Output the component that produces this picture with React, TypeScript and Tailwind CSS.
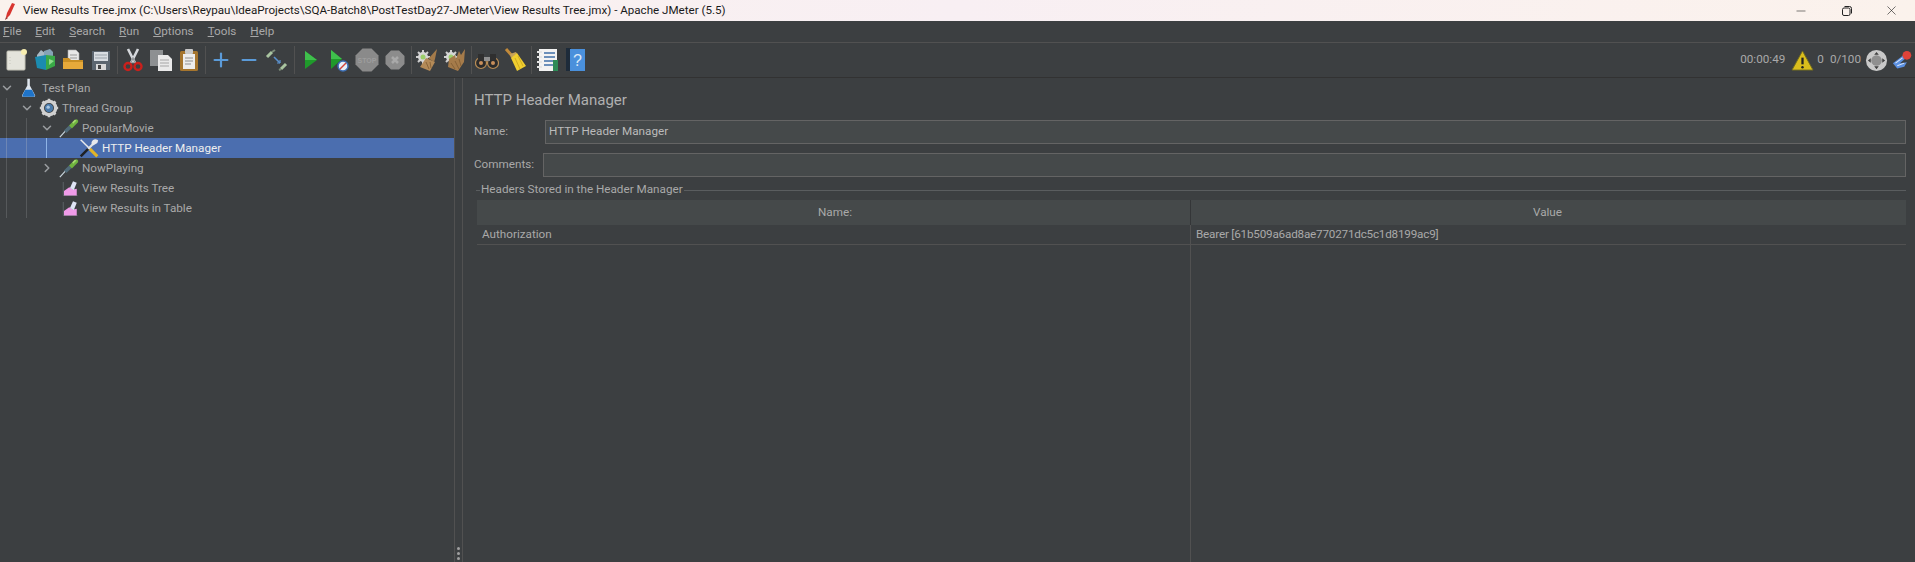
import type { ReactNode } from "react";
import { ChevronDown, ChevronRight, Minus, Plus, X } from "lucide-react";

const sans = "font-['Roboto','Open_Sans',sans-serif]";

function Svg({ size = 24, children }: { size?: number; children: ReactNode }) {
  return (
    <svg width={size} height={size} viewBox="0 0 24 24" className="shrink-0">
      {children}
    </svg>
  );
}

const NewIcon = () => (
  <Svg>
    <rect x="2" y="3" width="18" height="19" rx="1" fill="#e4e4dc" stroke="#c4c4b8" />
    <circle cx="19" cy="4" r="3" fill="#f7eeb0" />
    <path d="M5 9v9" stroke="#c8c8be" strokeDasharray="1 2" />
  </Svg>
);

const TemplatesIcon = () => (
  <Svg>
    <path d="M4 7l4-5 4 3v6H4z" fill="#a9b9c4" />
    <path d="M11 3l6-2 3 3v7h-9z" fill="#86a3b6" />
    <path d="M2 9l11-2v15l-9-2z" fill="#1b8bb0" />
    <path d="M13 7l9 1v10l-9 4z" fill="#39a947" />
    <path d="M16 11l5 2-5 4z" fill="#8fdc8c" />
  </Svg>
);

const OpenIcon = () => (
  <Svg>
    <path d="M7 2h8l3 3v10H7z" fill="#e8e8e8" stroke="#aaa" strokeWidth="0.6" />
    <path d="M9 7h7M9 10h7" stroke="#999" />
    <path d="M2 10h6l2 2h12v9H2z" fill="#c98f24" />
    <path d="M2 14h20v7H2z" fill="#e6a93a" />
  </Svg>
);

const SaveIcon = () => (
  <Svg>
    <path d="M3 3h18v19H3z" fill="#5c6670" />
    <rect x="5" y="4" width="14" height="9" fill="#d8dde2" />
    <path d="M6 7h12M6 10h12" stroke="#9aa3ab" />
    <rect x="7" y="16" width="10" height="6" fill="#d9d9d9" />
    <rect x="9" y="17" width="3" height="4" fill="#444" />
  </Svg>
);

const CutIcon = () => (
  <Svg>
    <path d="M7 1l7 14M17 1l-7 14" stroke="#d5d8dc" strokeWidth="2.6" />
    <path d="M11.8 9.5L14 15M12.2 9.5L10 15" stroke="#8b8f93" strokeWidth="1" />
    <circle cx="7" cy="18.5" r="3.5" fill="none" stroke="#c9201c" strokeWidth="2.4" />
    <circle cx="17" cy="18.5" r="3.5" fill="none" stroke="#c9201c" strokeWidth="2.4" />
  </Svg>
);

const CopyIcon = () => (
  <Svg>
    <path d="M1 2h13v16H1z" fill="#8d9092" />
    <path d="M9 7h10l4 4v12H9z" fill="#e9e9e9" />
    <path d="M11 12h9M11 15h9M11 18h9" stroke="#a5a5a5" />
  </Svg>
);

const PasteIcon = () => (
  <Svg>
    <rect x="3" y="3" width="18" height="20" rx="1.5" fill="#a5752e" />
    <path d="M6 6h12v15H6z" fill="#ededed" />
    <rect x="8" y="1" width="8" height="5" rx="1" fill="#c9c9c9" />
    <path d="M8 10h8M8 13h8M8 16h6" stroke="#8f8f8f" />
  </Svg>
);

const ToggleIcon = () => (
  <Svg>
    <path d="M2 9l5-5" stroke="#a9c4a0" strokeWidth="3" />
    <path d="M7 4l3-2" stroke="#7c8c78" strokeWidth="2" />
    <path d="M16 21l5-5" stroke="#a9c4a0" strokeWidth="3" />
    <path d="M14 22l2-1" stroke="#7c8c78" strokeWidth="2" />
    <path d="M9 9l6 6" stroke="#5b92cf" strokeWidth="1.6" />
    <path d="M15 15l-3 0M15 15l0-3" stroke="#5b92cf" strokeWidth="1.2" />
  </Svg>
);

const PlayIcon = ({ small = false }: { small?: boolean }) => (
  <Svg>
    <path d={small ? "M4 2l11 9-11 10z" : "M6 3l12 9-12 9z"} fill="#1f9a2b" />
    <path d={small ? "M4 2l11 9H4z" : "M6 3l12 9H6z"} fill="#3fc04c" />
  </Svg>
);

const NoPauseIcon = () => (
  <Svg>
    <PlayIcon small />
    <circle cx="16" cy="18" r="5" fill="#e6eef8" stroke="#3c6fb5" strokeWidth="1.5" />
    <path d="M13 21l6-6" stroke="#d2433a" strokeWidth="1.4" />
  </Svg>
);

const StopIcon = () => (
  <Svg>
    <path d="M7.5 0.5h9l7 7v9l-7 7h-9l-7-7v-9z" fill="#8a8a8a" />
    <text x="12" y="14.5" textAnchor="middle" fontSize="7" fontWeight="700" fill="#9d9d9d" fontFamily="Liberation Sans, sans-serif">
      STOP
    </text>
  </Svg>
);

const ShutdownIcon = () => (
  <Svg>
    <path d="M8 2.5h8l5.5 5.5v8L16 21.5H8L2.5 16V8z" fill="#8c8c8c" />
    <path d="M9 9l6 6M15 9l-6 6" stroke="#a9a9a9" strokeWidth="2.6" />
  </Svg>
);

const ClearIcon = ({ double = false }: { double?: boolean }) => (
  <Svg>
    <path
      d="M8 2v3M8 13v3M1 9h3M12 9h3M3 4l2 2M11 12l2 2M3 14l2-2M11 6l2-2"
      stroke="#cfcfcf"
      strokeWidth="2"
    />
    <circle cx="8" cy="9" r="5" fill="#d7d7d7" />
    <circle cx="8" cy="9" r="2.5" fill="#9bcf6a" />
    {double ? (
      <>
        <path d="M6 11l6-4 1 4 3-8 2 4 4-6-1 13-6 9-10-4z" fill="#a57b4a" />
        <path d="M8 15l4 6M12 13l4 8M16 11l2 7" stroke="#7d5a32" strokeWidth="0.8" />
      </>
    ) : (
      <>
        <path d="M22 1l-7 8-2 1 6 4 1-3z" fill="#a57b4a" />
        <path d="M11 10l9 4-5 9-10-4z" fill="#b38a58" />
        <path d="M11 14l3 7M15 14l1 6" stroke="#7d5a32" strokeWidth="0.8" />
      </>
    )}
  </Svg>
);

const SearchIcon = () => (
  <Svg>
    <circle cx="6" cy="15" r="5.5" fill="#2b2b2b" stroke="#b98d55" strokeWidth="1.2" />
    <circle cx="18" cy="15" r="5.5" fill="#2b2b2b" stroke="#b98d55" strokeWidth="1.2" />
    <path d="M3 6h6v6H3zM15 6h6v6h-6z" fill="#2f2f2f" />
    <rect x="9" y="9" width="6" height="4" fill="#8f8f8f" />
    <circle cx="6" cy="15" r="2" fill="#c98f5a" />
    <circle cx="18" cy="15" r="2" fill="#c98f5a" />
  </Svg>
);

const BroomIcon = () => (
  <Svg>
    <path d="M3 1l7 8" stroke="#c28a3a" strokeWidth="3" />
    <path d="M7 6l6-2 1 2-6 4z" fill="#c5a25a" />
    <path d="M8 10l6-5 9 13-9 5z" fill="#f0ce2f" />
    <path d="M12 10l5 11M15 8l5 10" stroke="#c7a21c" strokeWidth="0.8" />
  </Svg>
);

const FunctionIcon = () => (
  <Svg>
    <rect x="4" y="1" width="18" height="22" fill="#f2f2f2" />
    <path d="M9 5h11M9 9h11M9 13h11M9 17h11" stroke="#3f6fa8" strokeWidth="1.6" />
    <path d="M2 4h5M2 9h5M2 14h5M2 19h5" stroke="#e5e5e5" strokeWidth="2" />
    <rect x="18" y="12" width="5" height="11" fill="#2e8b57" />
  </Svg>
);

const HelpIcon = () => (
  <Svg>
    <rect x="3" y="0" width="5" height="23" fill="#1d2b3a" />
    <rect x="7" y="1" width="15" height="22" fill="#4a90dc" />
    <text x="14.5" y="18" textAnchor="middle" fontSize="16" fill="#dbe9f8" fontFamily="Liberation Sans, sans-serif">
      ?
    </text>
  </Svg>
);

const WarningIcon = () => (
  <Svg size={23}>
    <path d="M12 2l11 20H1z" fill="#d9bd1c" stroke="#6f6a22" />
    <path d="M12 9v7" stroke="#222" strokeWidth="2.4" />
    <circle cx="12" cy="19" r="1.3" fill="#222" />
  </Svg>
);

const GlobalIcon = () => (
  <Svg size={23}>
    <circle cx="12" cy="12" r="11" fill="#c9c9c9" />
    <circle cx="12" cy="12" r="5.5" fill="#8f8f8f" />
    <path d="M12 3l2.4 3h-4.8zM12 21l2.4-3h-4.8zM3 12l3-2.4v4.8zM21 12l-3-2.4v4.8z" fill="#3f3f3f" />
  </Svg>
);

const LogIcon = () => (
  <Svg size={21}>
    <path d="M1 15L13 6l2 4-6 5 8-1-3 5-8 2z" fill="#5a8fe0" />
    <path d="M4 15l8-6M6 18l8-3" stroke="#dbe7f8" strokeWidth="1.2" />
    <circle cx="17" cy="6" r="5" fill="#e0433a" />
  </Svg>
);

const FlaskIcon = () => (
  <Svg size={20}>
    <path d="M10 1h3v8l6 11a1.5 1.5 0 0 1-1.4 2.5H5.4A1.5 1.5 0 0 1 4 20l6-11z" fill="#dfe6ee" />
    <path d="M7.5 14h8l3.2 6.5a1.3 1.3 0 0 1-1.2 2H5.5a1.3 1.3 0 0 1-1.2-2z" fill="#1f74c9" />
  </Svg>
);

const GearIcon = () => (
  <Svg size={20}>
    <circle cx="12" cy="12" r="8" fill="none" stroke="#d0d0d0" strokeWidth="4" />
    <path
      d="M12 1v4M12 19v4M1 12h4M19 12h4M4.2 4.2l2.8 2.8M17 17l2.8 2.8M4.2 19.8L7 17M17 7l2.8-2.8"
      stroke="#d0d0d0"
      strokeWidth="3.2"
    />
    <circle cx="12" cy="12" r="5" fill="#4a79a8" />
    <circle cx="11" cy="11" r="2" fill="#a7c6e2" />
  </Svg>
);

const DropperIcon = () => (
  <Svg size={20}>
    <path d="M1 23l9-10" stroke="#c9d6de" strokeWidth="1.4" />
    <path d="M6 15l6-6 3 3-6 6z" fill="#506a78" />
    <path d="M12 9l7-7a2.5 2.5 0 0 1 3.5 3.5l-7 7z" fill="#6fb33f" />
    <path d="M16 5l3-3 2 1-4 4z" fill="#a8d873" />
  </Svg>
);

const ToolsIcon = () => (
  <Svg size={20}>
    {/* screwdriver: steel blade, yellow handle */}
    <path d="M2 2l11 11" stroke="#e7e9ec" strokeWidth="1.8" />
    <path d="M13 13l9 9" stroke="#e3b526" strokeWidth="3.6" />
    {/* wrench: dark handle, steel head */}
    <path d="M2 22l9-9" stroke="#1f2124" strokeWidth="3" />
    <path d="M11 13l5-5" stroke="#dfe2e6" strokeWidth="2.6" />
    <path d="M22 2a5 5 0 0 0-7 6l2 1 5-3 1-3z" fill="#e7e9ec" />
  </Svg>
);

const ResultsIcon = () => (
  <Svg size={18}>
    <path d="M3 4v18h19" stroke="#6a7378" strokeWidth="0.9" fill="none" />
    <path d="M4 22v-6l7-5 5 3 5-1v9z" fill="#ef9be8" />
    <path d="M12 12l4-9 5 2-4 10z" fill="#dfe4f5" />
  </Svg>
);

function ToolButton({ children }: { children: ReactNode }) {
  return <div className="flex h-[28px] w-[28px] shrink-0 items-center justify-center">{children}</div>;
}

const Sep = ({ wide = false }: { wide?: boolean }) => (
  <div className={`flex h-[28px] shrink-0 justify-center ${wide ? "w-[6px]" : "w-[4px]"}`}>
    <div className="h-full w-px bg-[#515151]" />
  </div>
);

const menus = ["File", "Edit", "Search", "Run", "Options", "Tools", "Help"];

interface TreeRow {
  label: string;
  icon: ReactNode;
  guides: number[]; // x of the vertical tree lines
  chevron?: "down" | "right";
  chevronX?: number;
  iconX: number;
  selected?: boolean;
}

const rows: TreeRow[] = [
  { label: "Test Plan", icon: <FlaskIcon />, guides: [], chevron: "down", chevronX: 0, iconX: 19 },
  { label: "Thread Group", icon: <GearIcon />, guides: [6], chevron: "down", chevronX: 20, iconX: 39 },
  { label: "PopularMovie", icon: <DropperIcon />, guides: [6, 26], chevron: "down", chevronX: 40, iconX: 59 },
  { label: "HTTP Header Manager", icon: <ToolsIcon />, guides: [6, 26, 46], iconX: 79, selected: true },
  { label: "NowPlaying", icon: <DropperIcon />, guides: [6, 26], chevron: "right", chevronX: 40, iconX: 59 },
  { label: "View Results Tree", icon: <ResultsIcon />, guides: [6, 26], iconX: 61 },
  { label: "View Results in Table", icon: <ResultsIcon />, guides: [6, 26], iconX: 61 },
];

function Row({ row }: { row: TreeRow }) {
  return (
    <div className={`relative flex h-5 items-center ${row.selected ? "bg-[#4b6eaf] text-[#eeeeee]" : ""}`}>
      {row.guides.map((x) => (
        <span
          key={x}
          className={`absolute top-0 bottom-0 w-px ${x === 46 ? "bg-[#8fb4e6]" : row.selected ? "bg-[#6d86b5]" : "bg-[#56595b]"}`}
          style={{ left: x }}
        />
      ))}
      {row.chevron && (
        <span className="absolute top-[3px]" style={{ left: row.chevronX }}>
          {row.chevron === "down" ? (
            <ChevronDown size={14} strokeWidth={2.6} color="#9a9da0" />
          ) : (
            <ChevronRight size={14} strokeWidth={2.6} color="#9a9da0" />
          )}
        </span>
      )}
      <span className="flex items-center" style={{ marginLeft: row.iconX }}>
        {row.icon}
      </span>
      <span className="ml-[3px] pt-px text-[11.7px]">{row.label}</span>
    </div>
  );
}

export default function App() {
  return (
    <div className={`flex h-[562px] w-[1915px] flex-col overflow-hidden bg-[#3c3f41] text-[#bbbbbb] ${sans}`}>
      {/* Window title bar */}
      <div className="flex h-[21px] shrink-0 items-center bg-linear-to-r from-[#faf2ed] via-[#f8eff3] to-[#fbf2ec] text-[#1a1a1a]">
        <svg width="14" height="18" viewBox="0 0 14 18" className="ml-[3px] shrink-0">
          <path d="M9 1l3 1-5 11-3 3-1-1 1-4z" fill="#d8352f" />
          <path d="M3 15l-1 3 3-2z" fill="#8f2a26" />
        </svg>
        <span className="ml-[6px] whitespace-nowrap text-[11.6px]">
          View Results Tree.jmx (C:\Users\Reypau\IdeaProjects\SQA-Batch8\PostTestDay27-JMeter\View Results Tree.jmx) - Apache JMeter (5.5)
        </span>
        <div className="ml-auto flex items-center text-[#222222]">
          <div className="flex w-[46px] justify-center">
            <Minus size={14} strokeWidth={1} />
          </div>
          <div className="flex w-[46px] justify-center">
            <svg width="12" height="12" viewBox="0 0 12 12" fill="none" stroke="#222" strokeWidth="1">
              <rect x="1.5" y="3" width="7.5" height="7.5" rx="1.5" />
              <path d="M3.5 1.5h5a2 2 0 0 1 2 2v5" />
            </svg>
          </div>
          <div className="flex w-[45px] justify-center pr-[2px]">
            <X size={15} strokeWidth={1} />
          </div>
        </div>
      </div>

      {/* Menu bar */}
      <div className="flex h-[22px] shrink-0 items-center border-b border-[#515151] pl-[3px] pt-px text-[11.7px] text-[#a9a9a9]">
        {menus.map((m) => (
          <span key={m} className="mr-[14px]">
            <span className="underline">{m[0]}</span>
            {m.slice(1)}
          </span>
        ))}
      </div>

      {/* Toolbar */}
      <div className="flex h-[35px] shrink-0 items-center border-b border-[#323232] pl-[3px]">
        <ToolButton><NewIcon /></ToolButton>
        <ToolButton><TemplatesIcon /></ToolButton>
        <ToolButton><OpenIcon /></ToolButton>
        <ToolButton><SaveIcon /></ToolButton>
        <Sep />
        <ToolButton><CutIcon /></ToolButton>
        <ToolButton><CopyIcon /></ToolButton>
        <ToolButton><PasteIcon /></ToolButton>
        <Sep />
        <ToolButton><Plus size={22} strokeWidth={2.4} color="#5b9bd9" /></ToolButton>
        <ToolButton><Minus size={22} strokeWidth={2.4} color="#5b9bd9" /></ToolButton>
        <ToolButton><ToggleIcon /></ToolButton>
        <Sep wide />
        <ToolButton><PlayIcon /></ToolButton>
        <ToolButton><NoPauseIcon /></ToolButton>
        <ToolButton><StopIcon /></ToolButton>
        <ToolButton><ShutdownIcon /></ToolButton>
        <Sep />
        <ToolButton><ClearIcon /></ToolButton>
        <ToolButton><ClearIcon double /></ToolButton>
        <Sep />
        <ToolButton><SearchIcon /></ToolButton>
        <ToolButton><BroomIcon /></ToolButton>
        <Sep />
        <ToolButton><FunctionIcon /></ToolButton>
        <ToolButton><HelpIcon /></ToolButton>

        <div className="ml-auto flex items-center pr-[2px] text-[11.7px] text-[#a9a9a9]">
          <span>00:00:49</span>
          <span className="ml-[6px]"><WarningIcon /></span>
          <span className="ml-[3px]">0</span>
          <span className="ml-[6px]">0/100</span>
          <span className="ml-[4px]"><GlobalIcon /></span>
          <span className="ml-[4px]"><LogIcon /></span>
        </div>
      </div>

      <div className="flex min-h-0 flex-1">
        {/* Tree */}
        <div className="w-[454px] shrink-0 text-[#a9a9a9]">
          {rows.map((r) => (
            <Row key={r.label} row={r} />
          ))}
        </div>

        {/* Splitter */}
        <div className="flex w-[9px] shrink-0 flex-col items-center justify-end gap-[2px] border-x border-[#515151] pb-[2px]">
          <span className="h-[3px] w-[3px] rounded-full bg-[#a0a0a0]" />
          <span className="h-[3px] w-[3px] rounded-full bg-[#a0a0a0]" />
          <span className="h-[3px] w-[3px] rounded-full bg-[#a0a0a0]" />
        </div>

        {/* Right panel */}
        <div className="flex min-w-0 flex-1 flex-col pl-[11px] pr-[9px]">
          <div className="mt-[12px] h-[20px] text-[15px] leading-[20px] text-[#b0b0b0]">HTTP Header Manager</div>

          <div className="mt-[10px] flex h-[24px] items-center text-[11.7px] text-[#a9a9a9]">
            <span className="w-[71px] shrink-0">Name:</span>
            <div className="flex h-full flex-1 items-center border border-[#646464] bg-[#45494a] pl-[3px] text-[#bbbbbb]">
              HTTP Header Manager
            </div>
          </div>

          <div className="mt-[9px] flex h-[24px] items-center text-[11.7px] text-[#a9a9a9]">
            <span className="w-[69px] shrink-0">Comments:</span>
            <div className="h-full flex-1 border border-[#646464] bg-[#45494a]" />
          </div>

          {/* Group box */}
          <div className="mt-[5px] flex h-[16px] items-center text-[11.7px] text-[#a9a9a9]">
            <div className="ml-[2px] h-px w-[4px] bg-[#5a5d5f]" />
            <span className="px-px">Headers Stored in the Header Manager</span>
            <div className="h-px flex-1 bg-[#5a5d5f]" />
          </div>

          {/* Table */}
          <div className="ml-[3px] mt-[2px] flex min-h-0 flex-1 flex-col text-[11.7px]">
            <div className="flex h-[25px] shrink-0 items-center bg-[#45494a] text-[#a9a9a9]">
              <div className="w-[713px] shrink-0 pl-[3px] text-center">Name:</div>
              <div className="h-full w-px bg-[#343638]" />
              <div className="flex-1 pr-[2px] text-center">Value</div>
            </div>
            <div className="flex h-[20px] shrink-0 items-center border-b border-[#515151] text-[#a9a9a9]">
              <div className="w-[713px] shrink-0 pl-[5px]">Authorization</div>
              <div className="h-full w-px bg-[#515151]" />
              <div className="flex-1 pl-[5px] tracking-[-0.2px]">Bearer [61b509a6ad8ae770271dc5c1d8199ac9]</div>
            </div>
            <div className="flex flex-1">
              <div className="w-[713px] shrink-0" />
              <div className="h-full w-px bg-[#515151]" />
            </div>
          </div>
        </div>
      </div>
    </div>
  );
}
